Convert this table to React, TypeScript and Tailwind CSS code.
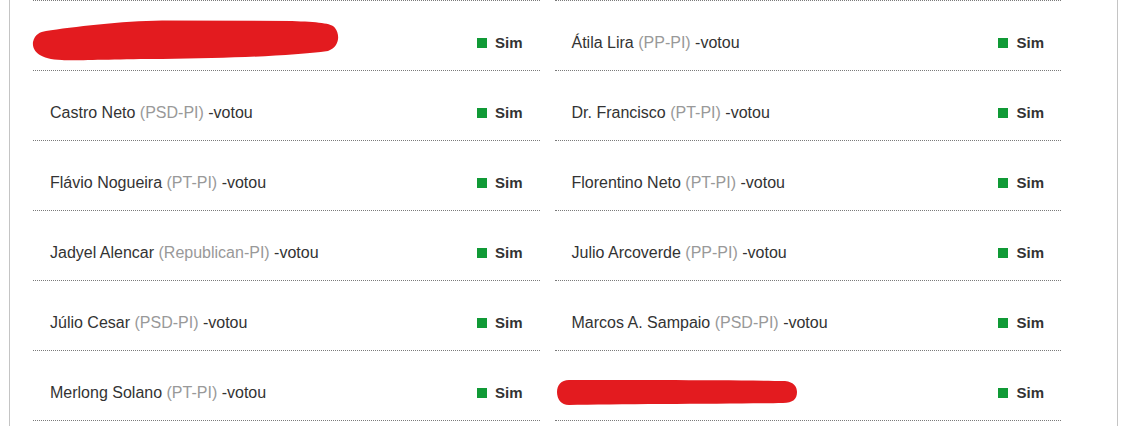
import React from 'react';

type Vote = {
  name?: string;
  party?: string;
  redacted?: 'long' | 'short';
};

const leftVotes: Vote[] = [
  { redacted: 'long' },
  { name: 'Castro Neto', party: 'PSD-PI' },
  { name: 'Flávio Nogueira', party: 'PT-PI' },
  { name: 'Jadyel Alencar', party: 'Republican-PI' },
  { name: 'Júlio Cesar', party: 'PSD-PI' },
  { name: 'Merlong Solano', party: 'PT-PI' },
];

const rightVotes: Vote[] = [
  { name: 'Átila Lira', party: 'PP-PI' },
  { name: 'Dr. Francisco', party: 'PT-PI' },
  { name: 'Florentino Neto', party: 'PT-PI' },
  { name: 'Julio Arcoverde', party: 'PP-PI' },
  { name: 'Marcos A. Sampaio', party: 'PSD-PI' },
  { redacted: 'short' },
];

function Scribble({ kind }: { kind: 'long' | 'short' }) {
  if (kind === 'long') {
    return (
      <svg className="absolute left-[-18px] top-[-12px]" width="308" height="44" viewBox="0 0 308 44">
        <path
          d="M14 12 C40 8 90 2 130 1.5 L260 2 C285 3 300 4 303 9 C308 15 308 28 296 32 C260 37 200 39 130 40 C80 40 42 42 30 41 C6 40 0 31 1 23 C3 15 8 13 14 12 Z"
          fill="#e31b1f"
        />
      </svg>
    );
  }
  return (
    <svg className="absolute left-[-15px] top-[-2px]" width="241" height="27" viewBox="0 0 241 27">
      <path
        d="M12 1 C60 1 180 1 228 2 C237 3 240 8 240 13 C240 20 236 24 226 24 C180 25 60 25 12 26 C4 26 0 20 0 13 C0 6 4 1 12 1 Z"
        fill="#e31b1f"
      />
    </svg>
  );
}

function VoteRow({ vote }: { vote: Vote }) {
  return (
    <div className="flex h-[70px] items-start border-b border-dotted border-[#7a7a7a] px-[17px] pt-[30px]">
      <div className="relative h-[24px] flex-1 text-[16px] leading-[24px] text-[#333]">
        {vote.redacted ? (
          <Scribble kind={vote.redacted} />
        ) : (
          <span>
            {vote.name} <span className="text-[#999]">({vote.party})</span> -votou
          </span>
        )}
      </div>
      <div className="flex h-[24px] items-center gap-[8px]">
        <span className="h-[10px] w-[10px] bg-[#109a36]" />
        <span className="text-[15px] font-bold leading-[24px] text-[#333]">Sim</span>
      </div>
    </div>
  );
}

export default function App() {
  return (
    <div className="h-[426px] overflow-hidden bg-white" style={{ fontFamily: '"Liberation Sans", Arial, sans-serif' }}>
      <div className="mx-[9px] h-full border-x border-[#c4c4c4] pl-[23px] pr-[56px]">
        <div className="grid grid-cols-2 gap-x-[15px]">
          {[leftVotes, rightVotes].map((col, i) => (
            <div key={i} className="flex flex-col border-t border-dotted border-[#7a7a7a]">
              {col.map((vote, j) => (
                <VoteRow key={j} vote={vote} />
              ))}
            </div>
          ))}
        </div>
      </div>
    </div>
  );
}
